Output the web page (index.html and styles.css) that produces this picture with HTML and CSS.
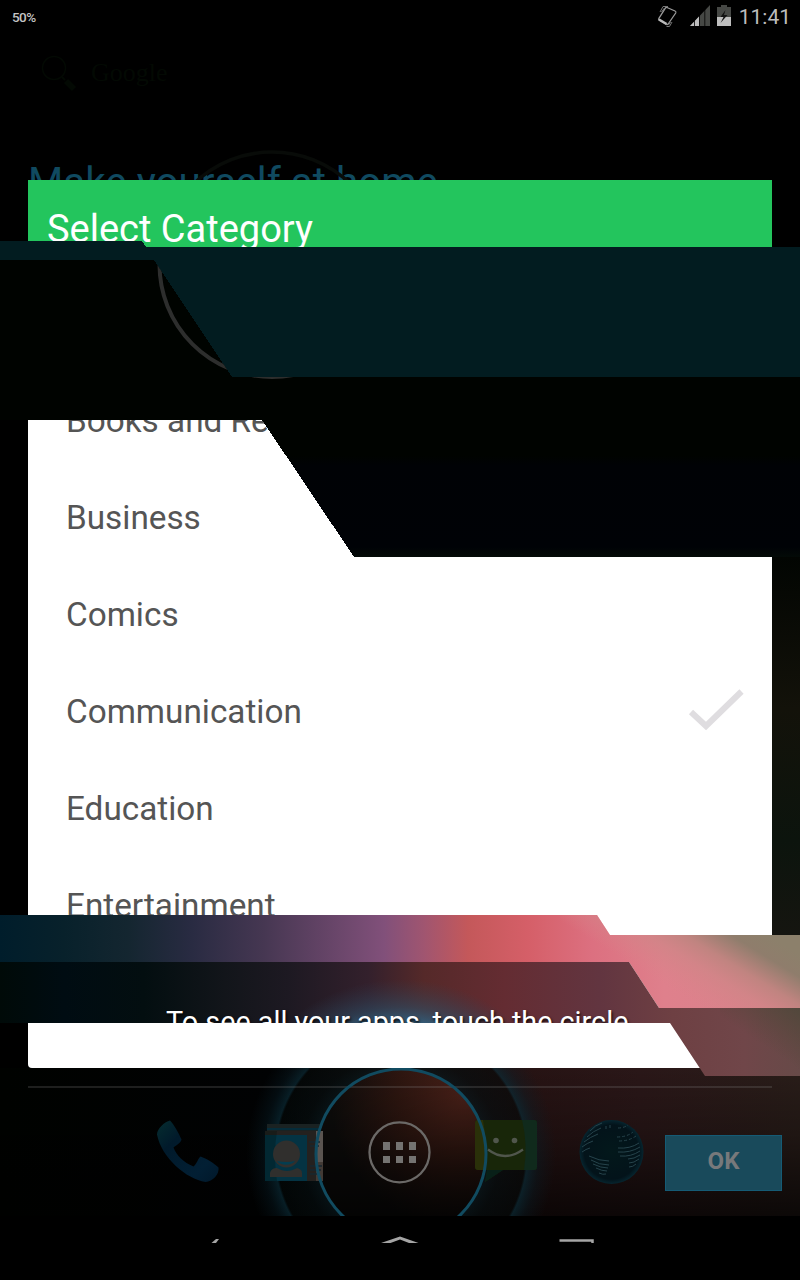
FILE: index.html
```html
<!DOCTYPE html>
<html lang="en">
<head>
<meta charset="utf-8">
<title>Select Category</title>
<link rel="stylesheet" href="styles.css">
</head>
<body>
<div class="screen">

  <div class="layer home">
    <header class="status">
      <span class="charge">50%</span>
      <svg class="status-icons" width="76" height="24" viewBox="657 4 76 24">
        <g fill="none" stroke="#9a9a9a" stroke-width="1.3">
          <path d="M667 7.500l8 3.500c1 .5 1.200 1 .7 2L668.500 23.500c-.6 1-1.200 1.200-2 .8l-7-4c-1-.6-1.200-1.200-.6-2l6.300-10c.5-.8 1-1 1.800-.8z"/>
          <path d="M659 19.500l7.500 4.500" stroke="#bbb" stroke-width="2.600"/>
          <path d="M660 12l3-5.500h5M661.500 12l3-4M672 22l-2.500 4.500h-3M670.500 22l-2 3" stroke="#777" stroke-width="1"/>
        </g>
        <path d="M690 26l20-21v21z" fill="#464845"/>
        <path d="M690 26l9-9.500V26z" fill="#bebebe"/>
        <path d="M694.500 19v7M699.500 14v12M704.800 9v17" stroke="#000" stroke-width=".8"/>
        <path d="M717 7h4V5h6v2h4v10h-14z" fill="#464845"/>
        <path d="M717 17h14v9h-14z" fill="#bebebe"/>
        <path d="M725.500 10l-5 7h3l-3 6 7-8h-3.500z" fill="#111"/>
      </svg>
      <span class="clock">11:41</span>
    </header>
    <div class="search">
      <svg width="38" height="40" viewBox="40 54 38 40" fill="none" stroke="#030903">
        <circle cx="54" cy="68" r="11.500" stroke-width="1.500"/>
        <path d="M62 77l3 3" stroke-width="2"/><path d="M66 81l8 8" stroke-width="6"/>
      </svg>
      <span class="brand">Google</span>
    </div>
    <h1 class="headline">Make yourself at home</h1>
  </div>

  <svg class="layer scene" viewBox="0 0 800 1280">
    <defs>
      <linearGradient id="floor" x1="0" x2="800" y1="0" y2="0" gradientUnits="userSpaceOnUse">
        <stop offset="0" stop-color="#000200"/><stop offset=".35" stop-color="#010203"/>
        <stop offset=".5" stop-color="#1c0e09"/><stop offset=".62" stop-color="#261212"/>
        <stop offset=".8" stop-color="#2a1718"/><stop offset="1" stop-color="#291d19"/>
      </linearGradient>
      <linearGradient id="fade" x1="0" x2="0" y1="1068" y2="1216" gradientUnits="userSpaceOnUse">
        <stop offset="0" stop-color="#000" stop-opacity="0"/><stop offset=".45" stop-color="#000" stop-opacity=".25"/>
        <stop offset="1" stop-color="#000" stop-opacity=".7"/>
      </linearGradient>
      <linearGradient id="edge" x1="0" x2="0" y1="557" y2="935" gradientUnits="userSpaceOnUse">
        <stop offset="0" stop-color="#020502"/><stop offset=".4" stop-color="#13120a"/>
        <stop offset=".75" stop-color="#0c140d"/><stop offset="1" stop-color="#151510"/>
      </linearGradient>
      <radialGradient id="halo" cx="401" cy="1154" r="155" gradientUnits="userSpaceOnUse">
        <stop offset=".55" stop-color="#07171c" stop-opacity=".7"/><stop offset=".64" stop-color="#040d0f" stop-opacity=".65"/>
        <stop offset=".8" stop-color="#030909" stop-opacity=".6"/><stop offset=".815" stop-color="#0a2a35" stop-opacity=".7"/>
        <stop offset=".89" stop-color="#08202a" stop-opacity=".35"/><stop offset="1" stop-color="#0a1c24" stop-opacity="0"/>
      </radialGradient>
      <radialGradient id="lens" cx="465" cy="1095" r="135" gradientUnits="userSpaceOnUse">
        <stop offset="0" stop-color="#4b2119"/><stop offset=".5" stop-color="#2e1610"/><stop offset="1" stop-color="#0d0c0b"/>
      </radialGradient>
      <linearGradient id="phone" x1="0" x2="1" y1="0" y2="1">
        <stop offset="0" stop-color="#062e30"/><stop offset=".3" stop-color="#011a2b"/><stop offset=".75" stop-color="#021f34"/><stop offset="1" stop-color="#01182a"/>
      </linearGradient>
      <radialGradient id="globe"><stop offset="0" stop-color="#03181b"/><stop offset=".85" stop-color="#03131a"/><stop offset="1" stop-color="#06252f"/></radialGradient>
      <clipPath id="floorClip"><path d="M0 1068h800v148H0z"/></clipPath>
    </defs>
    <circle cx="272" cy="264.500" r="112.500" fill="none" stroke="#080b08" stroke-width="3.500"/>
    <path d="M772 557h28v378h-28z" fill="url(#edge)"/>
    <g clip-path="url(#floorClip)">
      <path d="M0 1060h800v156H0z" fill="url(#floor)"/>
      <path d="M0 1060h800v156H0z" fill="url(#fade)"/>
      <circle cx="401" cy="1154" r="155" fill="url(#halo)"/>
      <circle cx="401" cy="1154" r="85" fill="url(#lens)"/>
      <circle cx="401" cy="1154" r="85" fill="url(#fade)"/>
      <path d="M28 1087h744" stroke="#888" stroke-opacity=".22" stroke-width="2"/>
      <path d="M157 1134.500c0-6 8-13 13-14 4 4 9 13 11.500 19-1 4-6 6-8 8 3 8 10 15 20 19 3-2 5-9 7-10 6 2 14 7 18 11 1 7-6 14-13 14.500-19-3-44-24-48.500-47.500z" fill="url(#phone)"/>
      <g>
        <path d="M267 1124h54v7h-54z" fill="#1a2222"/><path d="M267 1128h54v2h-54z" fill="#052c3a"/>
        <path d="M265 1131h58v50h-58z" fill="#24211f"/><path d="M265 1135h42v46h-42z" fill="#043343"/>
        <path d="M316 1131h7v31h-7z" fill="#5a5450"/><path d="M316 1162h7v19h-7z" fill="#423a35"/>
        <path d="M309 1142h11m-10 4h9m-9 20h12m-12 4h11m-11 4h9" stroke="#17272f" stroke-width="1.500"/>
        <path d="M265 1131h12q-4 24 0 50h-12z" fill="#00100e" opacity=".3"/>
        <circle cx="286.500" cy="1154" r="13.500" fill="#302f2d"/><path d="M277 1161q10 2 18 0c-4 5-14 5-18 0z" fill="#043d50"/>
        <path d="M270 1177v-4c1-4 4-5 7-5 7 4 13 4 20 0 3 1 5 2 5 5v4z" fill="#302f2d"/>
      </g>
      <path d="M478 1120h56q3 0 3 3v44q0 3-3 3h-31l-18 12 2-12h-9q-3 0-3-3v-44q0-3 3-3z" fill="#182609"/>
      <path d="M478 1120h5q5 26 1 50h-6q-3 0-3-3v-44q0-3 3-3z" fill="#2a3009"/>
      <path d="M522 1120h12q3 0 3 3v44q0 3-3 3h-10q4-26-2-50z" fill="#102a1c"/>
      <path d="M487 1170h16l-18 12z" fill="#082018"/>
      <circle cx="496" cy="1140.500" r="2.800" fill="#50564c"/><circle cx="514.500" cy="1140.500" r="2.800" fill="#50564c"/>
      <path d="M488 1149.500q17 13 35 0" fill="none" stroke="#50564c" stroke-width="2.300"/>
      <circle cx="611.500" cy="1152" r="32" fill="url(#globe)"/>
      <g fill="none" stroke="#26434b" stroke-width="1">
        <path d="M590 1131q5-6 12-8m-15 14q6-6 14-9m-17 14q6-5 14-8m-16 13q5-4 11-6m-11 11q4-3 8-4"/>
        <path d="M589 1156q10 5 20 5m-18-1q8 5 18 5m-16-1q8 4 15 4m-12 0q6 3 11 3m-8 2q4 2 7 1"/>
        <path d="M618 1148q12 1 21-5m-21 9q12 1 22-5m-20 9q11 1 20-5m-12 8q6 0 12-4m-11 8q5 0 10-4m-10 8q4 0 7-3"/>
        <path d="M617 1137q10 0 16-5m-14 9q10 0 17-5m-18-8q6 0 10-3M606 1126v5m4-6v4" stroke-dasharray="3 2"/>
      </g>
      <circle cx="401" cy="1154" r="85" fill="none" stroke="#114b60" stroke-width="3"/>
      <circle cx="399.500" cy="1152.300" r="30" fill="none" stroke="#6b6967" stroke-width="2.300"/>
      <path d="M383 1142h7v8h-7zm13 0h7v8h-7zm13 0h7v8h-7zm-26 14h7v7h-7zm13 0h7v7h-7zm13 0h7v7h-7z" fill="#747371"/>
    </g>
    <path d="M211.500 1243l4.500-4h3l-3 4z" fill="#a5a5a5"/>
    <path d="M381 1243l19-6.500 18.500 6.500h-9.500l-9-3.500-9.500 3.500z" fill="#a5a5a5"/>
    <path d="M559.500 1240.500h33v2.500" fill="none" stroke="#a5a5a5" stroke-width="2.500"/>
  </svg>

  <div class="layer stage">
    <section class="dialog">
      <h2 class="title">Select Category</h2>
      <ul class="list">
        <li class="item">Books and Re</li>
        <li class="item">Business</li>
        <li class="item">Comics</li>
        <li class="item">Communication
          <svg class="check" width="56" height="42" viewBox="688 689 56 42"><path d="M691 712l15 14 35.500-34.500" fill="none" stroke="#dfdde0" stroke-width="6"/></svg>
        </li>
        <li class="item">Education</li>
        <li class="item">Entertainment</li>
      </ul>
    </section>
    <button class="ok">OK</button>
  </div>

  <svg class="layer bands" viewBox="0 0 800 1280">
    <defs>
      <linearGradient id="aurora" x1="0" x2="800" y1="0" y2="0" gradientUnits="userSpaceOnUse">
        <stop offset="0" stop-color="#001d2b"/><stop offset=".08" stop-color="#08212b"/><stop offset=".16" stop-color="#142630"/>
        <stop offset=".24" stop-color="#292b42"/><stop offset=".33" stop-color="#463752"/><stop offset=".48" stop-color="#81507a"/>
        <stop offset=".53" stop-color="#a05570"/><stop offset=".585" stop-color="#c4585a"/><stop offset=".66" stop-color="#d55f68"/>
        <stop offset=".74" stop-color="#dc7080"/><stop offset=".83" stop-color="#df808c"/><stop offset="1" stop-color="#d6848b"/>
      </linearGradient>
      <linearGradient id="olive" x1="690" y1="1000" x2="740" y2="918" gradientUnits="userSpaceOnUse">
        <stop offset="0" stop-color="#d98489" stop-opacity="0"/><stop offset=".35" stop-color="#d08587" stop-opacity=".8"/>
        <stop offset=".55" stop-color="#c08480"/><stop offset=".8" stop-color="#8f7d6c"/><stop offset="1" stop-color="#8c806b"/>
      </linearGradient>
      <linearGradient id="dusk" x1="0" x2="800" y1="0" y2="0" gradientUnits="userSpaceOnUse">
        <stop offset="0" stop-color="#000a08"/><stop offset=".08" stop-color="#000c12"/><stop offset=".18" stop-color="#030e10"/>
        <stop offset=".28" stop-color="#12151a"/><stop offset=".36" stop-color="#1d1922"/><stop offset=".46" stop-color="#33202c"/>
        <stop offset=".53" stop-color="#552929"/><stop offset=".63" stop-color="#642c32"/><stop offset=".75" stop-color="#623540"/>
        <stop offset=".84" stop-color="#6e4043"/><stop offset=".93" stop-color="#704649"/><stop offset="1" stop-color="#674a48"/>
      </linearGradient>
      <linearGradient id="shade" x1="770" y1="1050" x2="800" y2="1005" gradientUnits="userSpaceOnUse">
        <stop offset="0" stop-color="#554538" stop-opacity="0"/><stop offset="1" stop-color="#50483b"/>
      </linearGradient>
      <radialGradient id="glow" cx="401" cy="1154" r="175" gradientUnits="userSpaceOnUse">
        <stop offset=".75" stop-color="#2f6484" stop-opacity=".9"/><stop offset=".84" stop-color="#2c5068" stop-opacity=".55"/><stop offset="1" stop-color="#2c4258" stop-opacity="0"/>
      </radialGradient>
      <linearGradient id="night" x1="0" x2="0" y1="455" y2="557" gradientUnits="userSpaceOnUse">
        <stop offset="0" stop-color="#000300"/><stop offset=".1" stop-color="#000205"/><stop offset=".9" stop-color="#000206"/><stop offset="1" stop-color="#030a07"/>
      </linearGradient>
      <clipPath id="nightClip"><path d="M0 260h154l78 117h568v180H354L262 420H0z"/></clipPath>
      <clipPath id="brightClip"><path d="M0 915h597l13 20h190v73H659l-30-46H0z"/></clipPath>
      <clipPath id="duskClip"><path d="M0 962h629l30 46h141v68h-95l-35-53H0z"/></clipPath>
    </defs>
    <g shape-rendering="crispEdges">
      <path d="M0 241h142l4 6h654v130H232L154 260H0z" fill="#021c20"/>
      <path d="M0 260h154l78 117h568v180H354L262 420H0z" fill="url(#night)"/>
    </g>
    <g clip-path="url(#nightClip)"><circle cx="272" cy="264.500" r="112.500" fill="none" stroke="#2d2e2d" stroke-width="4"/></g>
    <g clip-path="url(#brightClip)">
      <path d="M0 910h800v100H0z" fill="url(#aurora)"/>
      <path d="M560 910h240v100H560z" fill="url(#olive)"/>
    </g>
    <g clip-path="url(#duskClip)">
      <path d="M0 960h800v120H0z" fill="url(#dusk)"/>
      <path d="M720 1000h80v76h-80z" fill="url(#shade)"/>
      <circle cx="401" cy="1154" r="175" fill="url(#glow)"/>
    </g>
  </svg>
  <p class="hint">To see all your apps, touch the circle</p>
</div>
</body>
</html>
```
FILE: styles.css
```css
* { box-sizing: border-box; }
body { margin: 0; background: #000; font-family: Roboto, "Noto Sans", sans-serif; }
.screen {
  display: grid;
  grid-template: 1280px / 800px;
  width: 800px;
  height: 1280px;
  overflow: hidden;
  background: #000;
}
.layer { grid-area: 1 / 1; width: 800px; height: 1280px; }

.status {
  display: flex;
  align-items: center;
  height: 34px;
  padding: 0 9px 0 12px;
  color: #c4c4c4;
}
.charge { flex: 1; font-size: 13.5px; font-weight: 500; letter-spacing: -.6px; }
.status-icons { margin-top: -2px; }
.clock { margin-left: 6px; font-size: 21px; line-height: 34px; color: #bdbdbd; }
.search { display: flex; gap: 13px; height: 60px; padding: 20px 0 0 40px; color: #030903; }
.brand { font: 26px/38px "Liberation Serif", serif; }
.headline {
  height: 60px;
  margin: 64px 0 0 28px;
  font-size: 40.4px;
  font-weight: 400;
  line-height: 50px;
  white-space: nowrap;
  color: #104a60;
}

.stage { display: flex; flex-direction: column; padding: 180px 28px 0; }
.dialog {
  flex: none;
  height: 888px;
  overflow: hidden;
  border-radius: 0 0 4px 4px;
  background: #fff;
}
.title {
  height: 67px;
  margin: 0;
  padding: 20px 19px 0;
  background: #23c55d;
  color: #fff;
  font-size: 38px;
  font-weight: 400;
  line-height: 58px;
}
.list { margin: 0; padding: 126px 28px 0 38px; list-style: none; }
.item {
  display: flex;
  align-items: center;
  justify-content: space-between;
  height: 97px;
  padding-bottom: 2px;
  color: #555;
  font-size: 33.3px;
  line-height: 40px;
}
.check { margin-top: -4px; }
.ok {
  align-self: flex-end;
  flex: none;
  width: 117px;
  height: 56px;
  margin: 67px -10px 0 0;
  padding: 0 0 4px;
  border: 1px solid #155b75;
  background: #194a5b;
  color: #77797b;
  font: 700 24px/28px Roboto, sans-serif;
}
.hint {
  grid-area: 1 / 1;
  align-self: start;
  height: 23px;
  margin: 1000px 0 0 166px;
  overflow: hidden;
  color: #fff;
  font-size: 28.75px;
  line-height: 44px;
  white-space: nowrap;
  text-shadow: 1px 2px 3px #000;
}
```
